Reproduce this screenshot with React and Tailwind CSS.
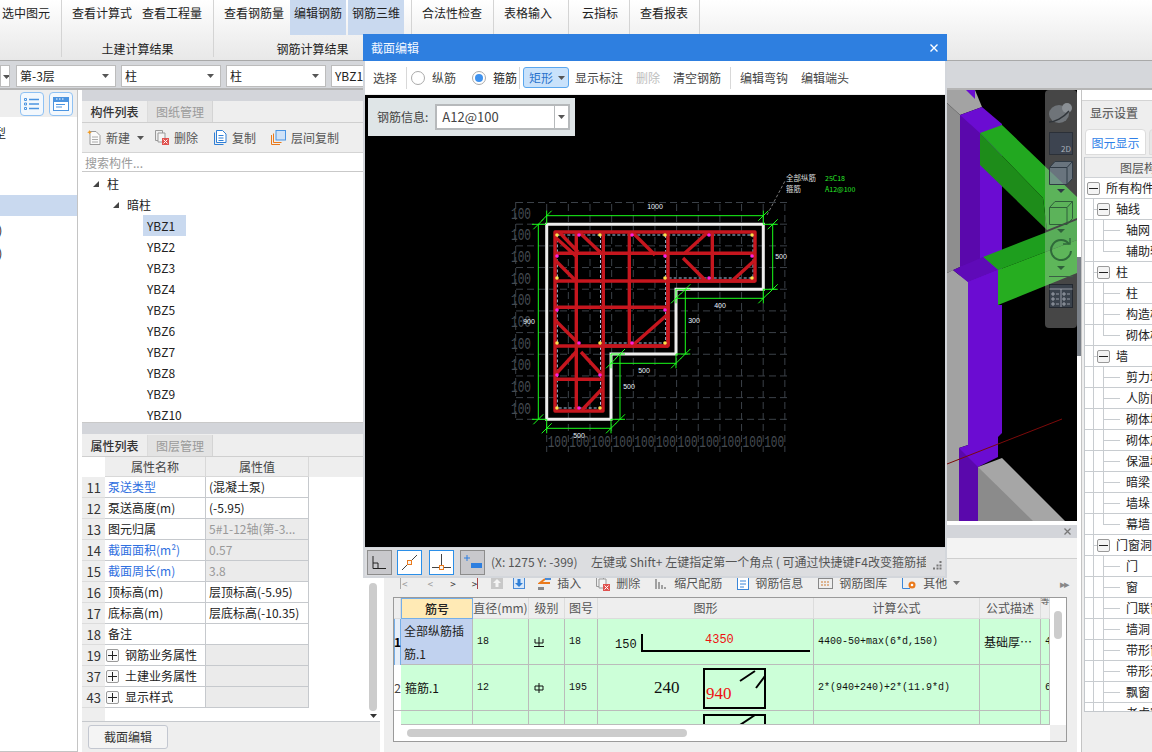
import React from "react";

const Caret = ({ c = "#555" }) => (
  <svg width="7" height="4" viewBox="0 0 7 4" className="shrink-0"><path d="M0 0h7L3.5 4z" fill={c} /></svg>
);

const Sel = ({ w, children, ml = "" }) => (
  <div className={`${w} ${ml} h-[22px] bg-white border border-[#bcbcbc] flex items-center justify-between px-[3px] text-[#222] shrink-0 overflow-hidden`}>
    <span className="whitespace-nowrap">{children}</span>
    {w !== "w-[10px]" && <span className="mr-[3px]"><Caret /></span>}
  </div>
);

const RB = ({ w = "", sel, children }) => (
  <div className={`${w} h-[35px] pt-[6px] leading-[14px] text-center whitespace-nowrap shrink-0 ${sel ? "bg-[#c9d9ef]" : ""}`}>{children}</div>
);

function Ribbon() {
  const sep = "border-r border-[#d4d4d4] h-[57px]";
  return (
    <div className="h-[60px] flex shrink-0 bg-linear-to-b from-white to-[#e8e8e8] text-[#222]">
      <div className={`w-[62px] pl-[2px] flex ${sep}`}><RB>选中图元</RB></div>
      <div className={`w-[152px] ${sep} flex flex-col`}>
        <div className="flex pl-[10px] gap-[10px] shrink-0"><RB>查看计算式</RB><RB>查看工程量</RB></div>
        <div className="h-[28px] shrink-0 flex items-center justify-center">土建计算结果</div>
      </div>
      <div className={`w-[198px] ${sep} flex flex-col`}>
        <div className="flex pl-[10px] shrink-0">
          <RB>查看钢筋量</RB>
          <div className="w-[6px]" />
          <RB w="w-[56px]" sel>编辑钢筋</RB>
          <div className="w-[2px]" />
          <RB w="w-[56px]" sel>钢筋三维</RB>
        </div>
        <div className="h-[28px] shrink-0 flex items-center justify-center">钢筋计算结果</div>
      </div>
      <div className={`w-[82px] pl-[10px] flex ${sep}`}><RB>合法性检查</RB></div>
      <div className={`w-[75px] pl-[10px] flex ${sep}`}><RB>表格输入</RB></div>
      <div className={`w-[61px] pl-[13px] flex ${sep}`}><RB>云指标</RB></div>
      <div className={`w-[70px] pl-[10px] flex ${sep}`}><RB>查看报表</RB></div>
    </div>
  );
}

function FilterBar() {
  return (
    <div className="h-[30px] shrink-0 bg-[#d5d7db] border-t border-[#a9a9a9] border-b-2 border-b-[#b5b5b5] flex items-start pt-[4px] gap-[5px]">
      <Sel w="w-[10px]"><span className="inline-block ml-[-1px] mt-[-2px] align-middle"><Caret /></span></Sel>
      <Sel w="w-[100px]" ml="ml-[1px]">第-3层</Sel>
      <Sel w="w-[100px]">柱</Sel>
      <Sel w="w-[100px]">柱</Sel>
      <Sel w="w-[100px]">YBZ1</Sel>
    </div>
  );
}

function LeftNav() {
  return (
    <div className="w-[78px] shrink-0 bg-white border-r border-[#c4c4c4] border-b flex flex-col overflow-hidden text-[#222]">
      <div className="h-[27px] shrink-0 bg-[#eeeeee] flex items-center justify-end gap-[5px] pr-[4px]">
        <div className="w-[24px] h-[24px] border border-[#8fc1f3] rounded-[4px] bg-[#f3f8fd] flex items-center justify-center">
          <svg width="16" height="14" viewBox="0 0 16 14" fill="none" stroke="#4c94e0"><path d="M.5 1.5h2v2h-2zM.5 6h2v2h-2zM.5 10.5h2v2h-2z" /><path d="M5 2.5h10M5 7h10M5 11.5h10" strokeWidth="1.4" /></svg>
        </div>
        <div className="w-[24px] h-[24px] border border-[#8fc1f3] rounded-[4px] bg-[#f3f8fd] flex items-center justify-center">
          <svg width="16" height="14" viewBox="0 0 16 14"><rect x="0" y="0" width="16" height="14" fill="#4c94e0" /><rect x="1" y="5" width="14" height="8" fill="#fff" /><path d="M3 7.5h9M3 10h6" stroke="#4c94e0" /><path d="M3 2h1.5M6 2h1.5M9 2h1.5" stroke="#fff" /></svg>
        </div>
      </div>
      <div className="h-[21px] mt-[5px] leading-[21px] ml-[-6px]">型</div>
      <div className="h-[52px] shrink-0" />
      <div className="h-[21px] bg-[#c9d9ef] shrink-0" />
      <div className="h-[22px] leading-[22px] ml-[-9px] mt-[3px]">Z)</div>
      <div className="h-[22px] leading-[22px] ml-[-9px] mt-[1px]">Z)</div>
    </div>
  );
}

const Tabs = ({ a, b }) => (
  <div className="h-[22px] shrink-0 bg-[#eeeeee] border-b border-[#cfcfcf] flex">
    <div className="w-[66px] text-center leading-[21px] font-medium text-[#333] border-r border-[#dcdcdc]">{a}</div>
    <div className="w-[65px] text-center leading-[21px] bg-[#e3e3e3] text-[#9a9a9a] border-r border-[#d4d4d4]">{b}</div>
  </div>
);

const Strip = () => <div className="h-[11px] shrink-0 bg-[#d3d5da]" />;

const IcoNew = () => (
  <svg width="14" height="15" viewBox="0 0 14 15" fill="none"><path d="M3 1.5h6l4 4v9H3z" fill="#fbfbfb" stroke="#9a9a9a" /><path d="M5 7h6M5 9.5h6M5 12h6" stroke="#aaa" /><path d="M2.5 0l.7 1.6 1.6.6-1.6.7-.7 1.6-.7-1.6L.2 2.2l1.6-.6z" fill="#f39a1e" /></svg>
);
const IcoDel = () => (
  <svg width="14" height="15" viewBox="0 0 14 15" fill="none"><path d="M.5.5h7v10h-7z" stroke="#999" /><path d="M3 3h7v9H3z" fill="#f4f4f4" stroke="#999" /><rect x="7" y="8" width="7" height="7" fill="#e0524f" /><path d="M8.500 9.500l4 4M12.500 9.500l-4 4" stroke="#fff" /></svg>
);
const IcoCopy = () => (
  <svg width="13" height="15" viewBox="0 0 13 15" fill="none"><path d="M.5 2.500v12h9" stroke="#2f7fd6" /><path d="M2.500.5h6l3.500 3.500v8.500H2.500z" fill="#fff" stroke="#2f7fd6" /><path d="M4.500 5.500h5M4.500 8h5M4.500 10.500h5" stroke="#2f7fd6" /></svg>
);
const IcoFloor = () => (
  <svg width="15" height="15" viewBox="0 0 15 15" fill="none"><path d="M.5 5v9.500H9" stroke="#ea7a1c" /><path d="M2.500 3.500v9h8" stroke="#ea7a1c" /><rect x="5" y=".5" width="9.500" height="9.500" fill="#cfe2f8" stroke="#4b95e3" /></svg>
);

const Tri = () => (
  <svg width="6" height="6" viewBox="0 0 6 6" className="shrink-0"><path d="M6 0v6H0z" fill="#444" /></svg>
);

function ComponentList() {
  const items = ["YBZ1", "YBZ2", "YBZ3", "YBZ4", "YBZ5", "YBZ6", "YBZ7", "YBZ8", "YBZ9", "YBZ10"];
  return (
    <div className="h-[333px] shrink-0 flex flex-col overflow-hidden">
      <Strip />
      <Tabs a="构件列表" b="图纸管理" />
      <div className="h-[30px] shrink-0 bg-[#eeeeee] border-b border-[#d4d4d4] flex items-center pl-[5px] text-[#555]">
        <IcoNew /><span className="ml-[5px]">新建</span><span className="ml-[7px]"><Caret /></span>
        <span className="ml-[11px]"><IcoDel /></span><span className="ml-[5px]">删除</span>
        <span className="ml-[16px]"><IcoCopy /></span><span className="ml-[5px]">复制</span>
        <span className="ml-[15px]"><IcoFloor /></span><span className="ml-[5px]">层间复制</span>
      </div>
      <div className="h-[19px] shrink-0 bg-white border-b border-[#c9c9c9] pl-[3px] leading-[19px] text-[#9a9a9a]">搜索构件...</div>
      <div className="flex-1 bg-white overflow-hidden text-[#222] pt-[1px] border-b border-[#c9c9c9]">
        <div className="h-[21px] flex items-center pl-[11px] gap-[8px]"><Tri /><span>柱</span></div>
        <div className="h-[21px] flex items-center pl-[31px] gap-[8px]"><Tri /><span>暗柱</span></div>
        {items.map((t, i) => (
          <div key={t} className="h-[21px] pl-[61px] flex">
            <div className={`h-[21px] w-[43px] pl-[4px] leading-[21px] ${i === 0 ? "bg-[#c9d9ef]" : ""}`}>{t}</div>
          </div>
        ))}
      </div>
    </div>
  );
}

const Plus = () => (
  <span className="w-[13px] h-[13px] border border-[#9a9a9a] rounded-[2px] bg-[#fafafa] flex items-center justify-center shrink-0">
    <svg width="9" height="9" viewBox="0 0 9 9"><path d="M0 4.500h9M4.500 0v9" stroke="#222" /></svg>
  </span>
);

function PropertyList() {
  const rows = [
    ["11", "泵送类型", "(混凝土泵)", "b", 0],
    ["12", "泵送高度(m)", "(-5.95)", "", 0],
    ["13", "图元归属", "5#1-12轴(第-3...", "", 1],
    ["14", "截面面积(m²)", "0.57", "b", 1],
    ["15", "截面周长(m)", "3.8", "b", 1],
    ["16", "顶标高(m)", "层顶标高(-5.95)", "", 0],
    ["17", "底标高(m)", "层底标高(-10.35)", "", 0],
    ["18", "备注", "", "", 0],
    ["19", "钢筋业务属性", "", "p", 2],
    ["37", "土建业务属性", "", "p", 2],
    ["43", "显示样式", "", "p", 2],
  ];
  return (
    <div className="flex-1 flex flex-col overflow-hidden">
      <Strip />
      <div className="h-px shrink-0 bg-[#eee]" />
      <Tabs a="属性列表" b="图层管理" />
      <div className="flex-1 bg-white flex relative">
        <div className="w-[23px] shrink-0 flex flex-col">
          <div className="h-[20px] bg-white" />
          {rows.map((r) => (
            <div key={r[0]} className="h-[21px] bg-[#eeeeee] border-b border-[#dcdcdc] text-[#333] text-right pr-[4px] leading-[21px] text-[13px]">{r[0]}</div>
          ))}
          <div className="flex-1 bg-[#eeeeee]" />
        </div>
        <div className="flex-1 flex flex-col">
          <div className="h-[20px] bg-[#eeeeee] flex">
            <div className="w-[101px] text-center leading-[19px] text-[#444] border-r border-b border-[#d8d8d8]">属性名称</div>
            <div className="w-[103px] text-center leading-[19px] text-[#444] border-r border-b border-[#d8d8d8]">属性值</div>
          </div>
          {rows.map((r) => (
            <div key={r[0]} className="h-[21px] flex">
              <div className={`w-[101px] border-r border-b border-[#c6c9cd] leading-[20px] whitespace-nowrap flex items-center ${r[3] === "b" ? "text-[#2f6fe0]" : "text-[#222]"} ${r[3] === "p" ? "pl-[1px]" : "pl-[3px]"}`}>
                {r[3] === "p" && <Plus />}
                <span className={r[3] === "p" ? "ml-[6px]" : ""}>{r[1]}</span>
              </div>
              <div className={`w-[103px] border-r border-b border-[#c6c9cd] pl-[3px] leading-[20px] whitespace-nowrap ${r[4] ? "bg-[#ebebeb] text-[#999]" : "text-[#222]"}`}>{r[2]}</div>
            </div>
          ))}
        </div>
        <div className="w-[12px] shrink-0 flex flex-col items-center justify-end pb-[3px] pr-[2px]">
          <div className="w-[8px] h-[128px] bg-[#cccccc] rounded-[4px]" />
          <div className="mt-[3px]"><Caret c="#333" /></div>
        </div>
      </div>
      <div className="h-[31px] shrink-0 bg-[#eeeeee] border-t border-[#c6c9cd] pl-[6px] pt-[3px]">
        <div className="w-[80px] h-[24px] bg-[#f4f4f4] border border-[#c3c7d0] rounded-[3px] text-center leading-[22px] text-[#333]">截面编辑</div>
      </div>
    </div>
  );
}

function Scene() {
  return (
    <svg width="130" height="431" viewBox="947 90 130 431">
      <rect x="947" y="90" width="130" height="431" fill="#000" />
      <polygon points="947,90 975,90 982,107 960,115 947,103" fill="#a3a3a3" />
      <polygon points="947,103 960,115 960,267 947,273" fill="#8e8e8e" />
      <polygon points="966,90 975,90 975,99" fill="#6a0cd0" />
      <polygon points="960,115 982,107 1002,124 1002,300 960,300" fill="#6b0cd2" />
      <polygon points="960,115 980,133 980,260 960,267" fill="#5a08ac" />
      <polygon points="980,133 1002,125 1077,197 1077,218 1047,230 1043,198" fill="#22a820" />
      <polygon points="980,133 1043,198 1047,230 980,165" fill="#1e8c1a" />
      <polygon points="983,257 1047,232 1077,220 1077,240 998,270" fill="#1e9e1e" />
      <polygon points="998,270 1077,240 1077,273 998,305" fill="#26ad20" />
      <polygon points="947,273 953,270 968,282 968,445 959,448 959,521 947,521" fill="#a2a2a2" />
      <polygon points="953,270 983,257 998,270 968,282" fill="#5f0ab8" />
      <polygon points="968,282 998,270 998,305 1002,305 1002,433 998,437 998,457 978,467 978,521 959,521 959,448 968,445" fill="#6b0cd2" />
      <polygon points="959,448 978,467 978,521 959,521" fill="#5a08ac" />
      <polygon points="978,467 1002,458 1065,521 978,521" fill="#a6a6a6" />
      <polygon points="978,467 1033,521 978,521" fill="#8b8b8b" />
      <line x1="947" y1="464" x2="1062" y2="419" stroke="#7c0a0a" />
    </svg>
  );
}

function FloatBar() {
  const s = "#2f3a44";
  return (
    <div className="absolute right-0 top-0 w-[32px] h-[238px] bg-[rgba(200,200,200,0.35)] rounded-[4px] flex flex-col items-center">
      <svg width="26" height="24" viewBox="0 0 26 24" className="mt-[11px]">
        <ellipse cx="11" cy="13" rx="10" ry="9" fill="#6f7479" />
        <circle cx="19" cy="7" r="5" fill="#8a8f94" />
        <path d="M1 21c6 0 14-4 20-11" stroke="#30353a" fill="none" strokeWidth="1.5" />
      </svg>
      <div className="w-[24px] h-[23px] mt-[7px] bg-[#3d4450] border border-[#2b3038] flex items-end justify-end pr-[1px]">
        <span className="text-[8px] leading-[11px] text-[#aab0b8]">2D</span>
      </div>
      <svg width="24" height="24" viewBox="0 0 24 24" className="mt-[6px]" fill="rgba(120,135,150,.7)" stroke={s}>
        <path d="M.5 6.500L6 .5h17.500v17L18 23.500H.5z" /><path d="M.5 6.500H18v17M18 6.500l5.500-6" fill="none" />
      </svg>
      <svg width="8" height="4" viewBox="0 0 8 4" className="mt-[4px]"><path d="M0 0h8L4 4z" fill="#2f3a44" /></svg>
      <svg width="24" height="24" viewBox="0 0 24 24" className="mt-[8px]" fill="none" stroke="#2f5f3a">
        <path d="M.5 6.500L6 .5h17.500v17L18 23.500H.5z" /><path d="M.5 6.500H18v17M18 6.500l5.500-6" />
      </svg>
      <svg width="8" height="4" viewBox="0 0 8 4" className="mt-[4px]"><path d="M0 0h8L4 4z" fill="#2f5f3a" /></svg>
      <svg width="24" height="24" viewBox="0 0 24 24" className="mt-[4px]" fill="none" stroke="#2f6a3a" strokeWidth="2">
        <path d="M20 7A10 10 0 1 0 22 14" /><path d="M14 7h7V1" strokeWidth="1.4" />
      </svg>
      <svg width="8" height="4" viewBox="0 0 8 4" className="mt-[5px]"><path d="M0 0h8L4 4z" fill="#2f5f3a" /></svg>
      <div className="w-[24px] h-px bg-[#3a5f45] mt-[6px]" />
      <svg width="24" height="24" viewBox="0 0 24 24" className="mt-[7px]" fill="#3a424c" stroke="#232830">
        <rect x=".5" y=".5" width="23" height="23" />
        <path d="M.5 5h23M12 5v18M3 9h2v2H3zM3 14h2v2H3zM3 19h2v2H3zM14 9h2v2h-2zM14 14h2v2h-2zM14 19h2v2h-2zM7 10h3M7 15h3M7 20h3M18 10h3M18 15h3M18 20h3" stroke="#aeb4bc" strokeWidth=".8" fill="none" />
      </svg>
    </div>
  );
}

const TB = ({ ml, icon, children }) => (
  <div className={`flex items-center shrink-0 ${ml}`}>
    {icon}
    {children && <span className="ml-[6px]">{children}</span>}
  </div>
);

function CellShape1() {
  return (
    <svg width="215" height="45" viewBox="0 0 215 45" className="block">
      <text x="17" y="29" fontSize="12" fill="#111" fontFamily="'Liberation Mono',monospace">150</text>
      <text x="107" y="24" fontSize="12" fill="#ee1111" fontFamily="'Liberation Mono',monospace">4350</text>
      <path d="M44 15v17h168" stroke="#000" strokeWidth="2" fill="none" />
    </svg>
  );
}
function CellShape2() {
  return (
    <svg width="215" height="45" viewBox="0 0 215 45" className="block">
      <text x="56" y="28" fontSize="17" fill="#111" fontFamily="'Liberation Serif',serif">240</text>
      <text x="108" y="34" fontSize="17" fill="#ee1111" fontFamily="'Liberation Serif',serif">940</text>
      <path d="M106 4h61v39h-61z" stroke="#000" strokeWidth="2" fill="none" />
      <path d="M142 16l15-10M158 23l9-12" stroke="#000" strokeWidth="2" fill="none" />
    </svg>
  );
}

function BottomTable() {
  const mono = "font-['Liberation_Mono','Noto_Sans_CJK_SC',monospace] text-[10px]";
  const c = "border-r border-b border-[#bbbbbb] overflow-hidden shrink-0";
  const cell = "flex items-center pl-[4px] text-[#111]";
  const h = "flex items-center justify-center border-r border-b border-[#dcdcdc] text-[#555] shrink-0 whitespace-nowrap";
  return (
    <div className="h-[145px] shrink-0 mx-[9px] mr-[10px] border border-[#9a9a9a] bg-white flex flex-col overflow-hidden">
      <div className="h-[127px] flex shrink-0 overflow-hidden">
        <div className="w-[656px] shrink-0 overflow-hidden">
          <div className="h-[21px] flex bg-[#eeeeee]">
            <div className={`${h} w-[7px]`} />
            <div className="w-[72px] h-[21px] flex items-center justify-center bg-[#ffeab5] border border-[#74aee8] text-[#222] font-medium shrink-0">筋号</div>
            <div className={`${h} w-[56px]`}>直径(mm)</div>
            <div className={`${h} w-[36px]`}>级别</div>
            <div className={`${h} w-[33px]`}>图号</div>
            <div className={`${h} w-[216px]`}>图形</div>
            <div className={`${h} w-[166px]`}>计算公式</div>
            <div className={`${h} w-[61px]`}>公式描述</div>
            <div className={`${h} w-[9px] items-start`}><span className="text-[9px] leading-[6px]">等</span></div>
          </div>
          <div className="h-[46px] flex bg-[#ccffd8]">
            <div className="w-[7px] shrink-0 bg-[#e6eef8] border-x border-[#74aee8] font-bold text-[#000] flex items-center justify-center">1</div>
            <div className={`${c} w-[72px] bg-[#c1d2ef] pl-[3px] leading-[23px] text-[#222]`}>全部纵筋插筋.1</div>
            <div className={`${c} ${cell} ${mono} w-[56px]`}>18</div>
            <div className={`${c} ${cell} w-[36px]`}>
              <svg width="10" height="10" viewBox="0 0 10 10" className="ml-[1px]" fill="none" stroke="#111"><path d="M1 2v4h8V2M5 0v10M0 9.500h10" /></svg>
            </div>
            <div className={`${c} ${cell} ${mono} w-[33px]`}>18</div>
            <div className={`${c} w-[216px]`}><CellShape1 /></div>
            <div className={`${c} ${cell} ${mono} w-[166px] pl-[3px] whitespace-nowrap`}>4400-50+max(6*d,150)</div>
            <div className={`${c} ${cell} w-[61px] pl-[3px] whitespace-nowrap`}>基础厚⋯</div>
            <div className={`${c} ${cell} ${mono} w-[9px] pl-[3px]`}>4</div>
          </div>
          <div className="h-[46px] flex bg-[#ccffd8]">
            <div className="w-[7px] shrink-0 bg-white text-[#444] border-b border-[#bbb] flex items-center justify-center">2</div>
            <div className={`${c} ${cell} w-[72px] pl-[3px]`}>箍筋.1</div>
            <div className={`${c} ${cell} ${mono} w-[56px]`}>12</div>
            <div className={`${c} ${cell} w-[36px]`}>
              <svg width="10" height="10" viewBox="0 0 10 10" className="ml-[1px]" fill="none" stroke="#111"><path d="M1 3h8v4H1zM5 0v10" /></svg>
            </div>
            <div className={`${c} ${cell} ${mono} w-[33px]`}>195</div>
            <div className={`${c} w-[216px]`}><CellShape2 /></div>
            <div className={`${c} ${cell} ${mono} w-[166px] pl-[3px] whitespace-nowrap`}>2*(940+240)+2*(11.9*d)</div>
            <div className={`${c} w-[61px]`} />
            <div className={`${c} ${cell} ${mono} w-[9px] pl-[3px]`}>6</div>
          </div>
          <div className="h-[14px] flex bg-[#ccffd8] overflow-hidden">
            <div className="w-[7px] shrink-0 bg-white" />
            <div className={`${c} w-[72px] h-[14px]`} />
            <div className={`${c} w-[56px] h-[14px]`} />
            <div className={`${c} w-[36px] h-[14px]`} />
            <div className={`${c} w-[33px] h-[14px]`} />
            <div className={`${c} w-[216px] h-[14px]`}>
              <svg width="215" height="14" viewBox="0 0 215 14" className="block"><path d="M106 14V4h61v10" stroke="#000" strokeWidth="2" fill="none" /><path d="M142 14l15-10" stroke="#000" strokeWidth="2" /></svg>
            </div>
            <div className={`${c} w-[166px] h-[14px]`} />
            <div className={`${c} w-[61px] h-[14px]`} />
            <div className={`${c} w-[9px] h-[14px]`} />
          </div>
        </div>
        <div className="flex-1 pl-[4px] pt-[13px]"><div className="w-[8px] h-[28px] bg-[#cccccc] rounded-[4px]" /></div>
      </div>
      <div className="flex-1 flex">
        <div className="w-[656px] pl-[13px] pt-[4px]"><div className="w-[280px] h-[8px] bg-[#cccccc] rounded-[4px]" /></div>
        <div className="flex-1 bg-[#eeeeee]" />
      </div>
    </div>
  );
}

function CenterCol() {
  return (
    <div className="w-[693px] shrink-0 flex flex-col bg-[#eeeeee] overflow-hidden relative">
      <div className="h-[431px] shrink-0 bg-black flex justify-end relative">
        <Scene />
        <FloatBar />
      </div>
      <div className="h-[4px] shrink-0 bg-white" />
      <div className="h-[13px] shrink-0 bg-[#d3d5da] flex items-center justify-end pr-[6px]">
        <svg width="7" height="7" viewBox="0 0 7 7"><path d="M.5.5l6 6M6.500.5l-6 6" stroke="#777" strokeWidth="1.3" /></svg>
      </div>
      <div className="h-[21px] shrink-0 bg-[#f3f3f3] border-b border-[#cfcfcf]" />
      <div className="h-[38px] shrink-0 flex items-end pb-[5px] pl-[16px] text-[#555] relative">
        <div className="h-[18px] flex items-center w-full">
          <span className="w-[1px] h-[12px] bg-[#aaa]" />
          <TB ml="ml-[1px]" icon={<span className="text-[10px] text-[#999]">&lt;</span>} />
          <TB ml="ml-[20px]" icon={<span className="text-[10px] text-[#999]">&lt;</span>} />
          <TB ml="ml-[17px]" icon={<span className="text-[10px] text-[#333]">&gt;</span>} />
          <TB ml="ml-[16px]" icon={<span className="text-[10px] text-[#333]">&gt;</span>} />
          <span className="w-[1px] h-[12px] bg-[#a44]" />
          <TB ml="ml-[13px]" icon={<svg width="12" height="12" viewBox="0 0 12 12"><rect width="12" height="12" fill="#c8c8c8" /><path d="M6 2l4 4H7.500v4h-3V6H2z" fill="#f4f4f4" /></svg>} />
          <TB ml="ml-[10px]" icon={<svg width="12" height="12" viewBox="0 0 12 12"><rect x=".5" y=".5" width="11" height="11" fill="#d8e7f8" stroke="#4b8bd6" /><path d="M6 10L2 6h2.500V2h3v4H10z" fill="#2f7fd6" /></svg>} />
          <TB ml="ml-[13px]" icon={<svg width="13" height="13" viewBox="0 0 13 13"><path d="M7 2L2 6h10" stroke="#ea7a1c" strokeWidth="2" fill="none" /><path d="M7 0h6v3H7z" fill="#4b8bd6" /><path d="M0 10h6v3H0z" fill="#888" /></svg>}>插入</TB>
          <TB ml="ml-[15px]" icon={<IcoDel />}>删除</TB>
          <TB ml="ml-[15px]" icon={<svg width="13" height="13" viewBox="0 0 13 13"><path d="M1 2v10M4 5v7M7 8v4M10 10v2" stroke="#888" strokeWidth="1.5" /></svg>}>缩尺配筋</TB>
          <TB ml="ml-[15px]" icon={<svg width="12" height="13" viewBox="0 0 12 13" fill="none"><rect x=".5" y=".5" width="11" height="12" stroke="#3a86d8" fill="#fff" /><path d="M3 4h6M3 7h6M3 10h4" stroke="#3a86d8" /></svg>}>钢筋信息</TB>
          <TB ml="ml-[15px]" icon={<svg width="15" height="13" viewBox="0 0 15 13" fill="none"><rect x=".5" y="1.500" width="14" height="10" stroke="#888" /><path d="M3 5h9M3 8h9" stroke="#cc7a33" strokeDasharray="2 1" /></svg>}>钢筋图库</TB>
          <TB ml="ml-[15px]" icon={<svg width="15" height="14" viewBox="0 0 15 14" fill="none"><path d="M.5 12.500V1h6" stroke="#3a86d8" /><path d="M.5 12.500H8" stroke="#3a86d8" /><circle cx="10" cy="9" r="3.500" fill="#ea7a1c" /><circle cx="10" cy="9" r="1.300" fill="#fff" /></svg>}>其他</TB>
          <span className="ml-[6px]"><Caret c="#777" /></span>
          <span className="ml-auto mr-[9px] text-[11px] text-[#888] tracking-[-2px]">▸▸</span>
        </div>
      </div>
      <BottomTable />
    </div>
  );
}

function RightPanel() {
  const rows = [
    [0, "所有构件"], [1, "轴线"], [2, "轴网"], [3, "辅助轴线"], [1, "柱"], [2, "柱"], [2, "构造柱"], [3, "砌体柱"],
    [1, "墙"], [2, "剪力墙"], [2, "人防门框墙"], [2, "砌体墙"], [2, "砌体加筋"], [2, "保温墙"], [2, "暗梁"], [2, "墙垛"], [3, "幕墙"],
    [1, "门窗洞"], [2, "门"], [2, "窗"], [2, "门联窗"], [2, "墙洞"], [2, "带形窗"], [2, "带形洞"], [2, "飘窗"], [2, "老虎窗"],
  ];
  const Minus = () => (
    <span className="w-[13px] h-[13px] border border-[#9a9a9a] rounded-[2px] bg-[#f4f4f4] flex items-center justify-center shrink-0">
      <svg width="9" height="1" viewBox="0 0 9 1"><path d="M0 .5h9" stroke="#222" /></svg>
    </span>
  );
  return (
    <div className="flex-1 border-l border-[#c4c4c4] bg-[#eeeeee] flex flex-col overflow-hidden text-[#222] whitespace-nowrap">
      <div className="h-[11px] shrink-0 bg-white border-b border-[#d4d4d4]" />
      <div className="h-[24px] shrink-0 pl-[8px] leading-[24px] text-[#666] font-medium">显示设置</div>
      <div className="h-[32px] shrink-0 flex items-end pl-[3px] gap-[3px] pb-[2px]">
        <div className="w-[61px] shrink-0 h-[26px] bg-white border border-[#dcdcdc] rounded-t-[4px] text-center leading-[25px] text-[#2f7fe8]">图元显示</div>
        <div className="w-[20px] shrink-0 h-[26px] bg-[#e6e6e6] border border-[#dcdcdc] rounded-t-[4px]" />
      </div>
      <div className="ml-[2px] border-l border-b border-[#c4c8cc] h-[555px] shrink-0 overflow-hidden bg-white">
        <div className="h-[21px] bg-[#eeeeee] border-t border-b border-[#cfd2d6] pl-[35px] leading-[19px] text-[#555]">图层构件</div>
        {rows.map(([lv, t], i) => (
          <div key={i} className="h-[21px] flex items-center border-b border-[#c8ccd0] overflow-hidden">
            {lv === 0 ? (
              <>
                <span className="ml-[2px]"><Minus /></span>
                <span className="ml-[6px]">{t}</span>
              </>
            ) : (
              <>
                <div className="w-[9px] self-stretch border-r border-[#c8ccd0] shrink-0" />
                {lv === 1 ? (
                  <>
                    <div className="w-[3px] h-px bg-[#c8ccd0] shrink-0" />
                    <Minus />
                    <span className="ml-[6px]">{t}</span>
                  </>
                ) : (
                  <>
                    <div className="w-[9px] shrink-0" />
                    <div className="w-[17px] self-stretch flex flex-col shrink-0">
                      <div className="h-[11px] border-l border-b border-[#c8ccd0]" />
                      <div className={`flex-1 ${lv === 2 ? "border-l border-[#c8ccd0]" : ""}`} />
                    </div>
                    <span className="ml-[6px]">{t}</span>
                  </>
                )}
              </>
            )}
          </div>
        ))}
      </div>
    </div>
  );
}

const Grid = () => {
  const xs = Array.from({ length: 12 }, (_, i) => 546.7 + i * 21.65);
  const ys = Array.from({ length: 11 }, (_, i) => 202.5 + i * 21.68);
  return (
    <g>
      <g stroke="#3b4148" strokeDasharray="7 4">
        {xs.map((x) => <line key={x} x1={x} y1="204" x2={x} y2="452" />)}
        <line x1="515.7" y1="202" x2="515.7" y2="422" />
        {ys.map((y) => <line key={y} x1="516" y1={y} x2="787" y2={y} />)}
      </g>
      <g fill="#454b52" fontSize="16" fontFamily="'Liberation Mono',monospace">
        {ys.slice(0, 10).map((y) => <text key={y} x="511" y={y + 16} textLength="20" lengthAdjust="spacingAndGlyphs">100</text>)}
        {xs.slice(0, 11).map((x) => <text key={x} x={x + 1} y="447" textLength="20" lengthAdjust="spacingAndGlyphs">100</text>)}
      </g>
    </g>
  );
};

function Rebar() {
  const diag = [
    [555, 237, 576, 256], [560, 233, 578, 252], [580, 233, 601, 253], [633, 233, 655, 255], [685, 253, 707, 233],
    [683, 258, 705, 280], [733, 280, 755, 260], [555, 260, 576, 281], [555, 320, 577, 342], [633, 345, 667, 315],
    [555, 375, 576, 352], [581, 352, 602, 375], [582, 410, 602, 389],
  ];
  const hs = [[253.3, 555, 755], [281, 555, 755], [307.3, 555, 668], [346, 555, 668], [379.3, 555, 602.7]];
  const vs = [[576.3, 232, 411], [603.3, 232, 346], [629.3, 232, 346], [668, 232, 346], [712.3, 232, 281]];
  const yellow = [[557, 235], [600, 235], [665, 235], [752, 235], [557, 278], [665, 278], [752, 278], [557, 343], [600, 343], [665, 343], [557, 408], [600, 408]];
  const mag = [[579, 235], [632, 235], [709, 235], [557, 256], [665, 256], [752, 256], [709, 278], [557, 310], [665, 310], [579, 343], [632, 343], [557, 375], [600, 375], [579, 408]];
  return (
    <g>
      <path d="M557.3 235H753V278H665.7V343H600.5V408H557.3Z M600.5 235V343 M665.7 235V278" fill="none" stroke="#a9c6e6" strokeDasharray="3 2" />
      <g stroke="#c6161e" strokeWidth="3.4" fill="none" strokeLinejoin="round">
        <path d="M555 232H755V281H668V346H603V411H555Z" />
        {hs.map(([y, a, b]) => <line key={y} x1={a} y1={y} x2={b} y2={y} />)}
        {vs.map(([x, a, b]) => <line key={x} x1={x} y1={a} x2={x} y2={b} />)}
        {diag.map((d, i) => <line key={i} x1={d[0]} y1={d[1]} x2={d[2]} y2={d[3]} />)}
      </g>
      {yellow.map(([x, y], i) => <circle key={i} cx={x} cy={y} r="1.8" fill="#ffe14d" />)}
      {mag.map(([x, y], i) => <circle key={i} cx={x} cy={y} r="1.8" fill="#ff20e0" />)}
    </g>
  );
}

function Dims() {
  const t = (x, y) => `M${x - 5} ${y + 5}L${x + 5} ${y - 5}`;
  const hd = (y, a, b, e) => `M${a} ${y}H${b}M${a} ${e}V${y + (y > e ? 5 : -5)}M${b} ${e}V${y + (y > e ? 5 : -5)}${t(a, y)}${t(b, y)}`;
  const vd = (x, a, b, e) => `M${x} ${a}V${b}M${e} ${a}H${x + 5}M${e} ${b}H${x + 5}${t(x, a)}${t(x, b)}`;
  const lbl = [["1000", 655, 209], ["900", 529, 324], ["500", 781, 259], ["400", 720, 308], ["300", 694, 323], ["500", 644, 373], ["500", 629, 389], ["500", 579, 438]];
  return (
    <g>
      <path
        d={[
          hd(215.7, 546.7, 763.3, 224),
          vd(772.7, 224.3, 289.3, 763),
          hd(298.3, 676, 763.3, 289),
          vd(685.3, 289.3, 354, 676),
          hd(363.3, 611, 676, 354),
          vd(620, 354, 419.3, 611),
          hd(428.3, 546.7, 611, 419),
          `M538.3 224.3V419.3M532 224.3H546M532 419.3H546${t(538.3, 224.3)}${t(538.3, 419.3)}`,
        ].join("")}
        stroke="#19ff19"
        fill="none"
      />
      <path d="M767 215L785 181" stroke="#777" strokeDasharray="3 2" fill="none" />
      {lbl.map(([s, x, y], i) => (
        <text key={i} x={x} y={y} textAnchor="middle" fontSize="7" fill="#e8f2ff" fontFamily="'Liberation Sans',sans-serif">{s}</text>
      ))}
      <g fontSize="7.5" fontFamily="'Noto Sans CJK SC',sans-serif">
        <text x="786" y="181" fill="#ddd">全部纵筋</text>
        <text x="825" y="181" fill="#29e829" fontSize="7">25C18</text>
        <text x="786" y="192" fill="#ddd">箍筋</text>
        <text x="825" y="192" fill="#29e829" fontSize="7">A12@100</text>
      </g>
    </g>
  );
}

function Modal() {
  const sep = "w-px h-[22px] bg-[#d8d8d8] shrink-0";
  const radio = "w-[14px] h-[14px] rounded-full border border-[#aaaaaa] bg-white flex items-center justify-center shrink-0";
  const btn = "w-[25px] h-[25px] flex items-center justify-center shrink-0";
  return (
    <div className="absolute left-[363px] top-[34px] w-[584px] h-[544px] bg-[#d3d6db] flex flex-col z-10">
      <div className="h-[27px] shrink-0 bg-[#2e7fe0] text-[#f4f8ff] flex items-center justify-between pl-[8px] pr-[9px]">
        <span>截面编辑</span>
        <svg width="8" height="8" viewBox="0 0 8 8"><path d="M.5.5l7 7M7.500.5l-7 7" stroke="#fff" strokeWidth="1.4" /></svg>
      </div>
      <div className="flex-1 mx-[2px] flex flex-col bg-white min-h-0">
        <div className="h-[33px] shrink-0 flex items-center text-[#444] whitespace-nowrap">
          <span className="ml-[8px]">选择</span>
          <span className={`${sep} ml-[9px]`} />
          <span className={`${radio} ml-[4px]`} />
          <span className="ml-[7px]">纵筋</span>
          <span className={`${radio} ml-[16px]`}><span className="w-[8px] h-[8px] rounded-full bg-[#3f92ee]" /></span>
          <span className="ml-[7px] text-[#222]">箍筋</span>
          <span className={`${sep} ml-[2px]`} />
          <span className="ml-[3px] w-[46px] h-[21px] bg-[#c9e2fb] border border-[#5ba7ee] rounded-[3px] flex items-center pl-[5px] gap-[5px] text-[#2a72cc]">矩形<Caret /></span>
          <span className="ml-[6px]">显示标注</span>
          <span className="ml-[13px] text-[#bdbdbd]">删除</span>
          <span className="ml-[13px]">清空钢筋</span>
          <span className={`${sep} ml-[9px]`} />
          <span className="ml-[9px]">编辑弯钩</span>
          <span className="ml-[13px]">编辑端头</span>
        </div>
        <div className="h-px shrink-0 bg-[#eee]" />
        <div className="h-[452px] shrink-0 bg-black relative overflow-hidden">
          <svg width="580" height="452" viewBox="365 95 580 452" className="absolute inset-0">
            <Grid />
            <path d="M546.7 224.3H763.3V289.3H676V354H611V419.3H546.7Z" fill="none" stroke="#eeeeee" strokeWidth="3" />
            <Rebar />
            <Dims />
          </svg>
          <div className="absolute left-[3px] top-[3px] w-[207px] h-[38px] bg-[#dfe5e7] flex items-center pl-[9px] text-[#444] whitespace-nowrap">
            <span>钢筋信息:</span>
            <div className="ml-[7px] w-[135px] h-[26px] bg-white border-2 border-[#b6b9bb] flex items-center">
              <span className="flex-1 pl-[5px] text-[13px] text-[#444]">A12@100</span>
              <span className="w-[14px] self-stretch border-l border-[#b6b9bb] flex items-center justify-center"><Caret /></span>
            </div>
          </div>
        </div>
        <div className="h-px shrink-0 bg-[#d3d6db]" />
        <div className="h-[28px] flex-1 bg-[#dcdde0] flex items-center pl-[2px] overflow-hidden whitespace-nowrap text-[#555] relative">
          <div className={`${btn} bg-[#c8c8cc] border border-[#8c8c8c]`}>
            <svg width="15" height="15" viewBox="0 0 15 15" fill="none" stroke="#222"><path d="M1 1v12.500h13M1 8h5v5.500" /></svg>
          </div>
          <div className={`${btn} ml-[5px] bg-white border border-[#2b8fe8]`}>
            <svg width="17" height="17" viewBox="0 0 17 17"><path d="M1 16L16 1" stroke="#444" /><rect x="6.500" y="6.500" width="4" height="4" fill="#f5f5f5" stroke="#ea7a1c" /></svg>
          </div>
          <div className={`${btn} ml-[7px] bg-white border border-[#2b8fe8]`}>
            <svg width="19" height="17" viewBox="0 0 19 17"><path d="M0 13.500h19M9.500 0v14" stroke="#444" /><rect x="7.500" y="11.500" width="4" height="4" fill="#f5f5f5" stroke="#ea7a1c" /></svg>
          </div>
          <div className={`${btn} ml-[6px] bg-[#c8c8cc] border border-[#8c8c8c]`}>
            <svg width="18" height="16" viewBox="0 0 18 16"><path d="M3 1v6M0 4h6" stroke="#2e7fe0" /><rect x="7" y="9" width="11" height="5" fill="#2e7fe0" /></svg>
          </div>
          <span className="ml-[6px] w-[435px] overflow-hidden shrink-0">(X: 1275 Y: -399)&nbsp;&nbsp;&nbsp;&nbsp;&nbsp;左键或 Shift+ 左键指定第一个角点 ( 可通过快捷键F4改变箍筋插入方式)</span>
          <svg width="9" height="9" viewBox="0 0 9 9" className="ml-[7px] mt-[7px] shrink-0"><path d="M6.500 0h2v2h-2zM3.500 3.500h2v2h-2zM6.500 3.500h2v2h-2zM0 6.500h2v2H0zM3.500 6.500h2v2h-2zM6.500 6.500h2v2h-2z" fill="#777" /></svg>
        </div>
      </div>
      <div className="h-[2px] shrink-0" />
    </div>
  );
}

export default function App() {
  return (
    <div className="w-[1152px] h-[752px] relative overflow-hidden bg-white flex flex-col text-[12px] font-['Noto_Sans_CJK_SC','Liberation_Sans',sans-serif]">
      <Ribbon />
      <FilterBar />
      <div className="flex-1 flex min-h-0 bg-white">
        <LeftNav />
        <div className="w-[4px] shrink-0" />
        <div className="w-[298px] shrink-0 flex flex-col">
          <ComponentList />
          <PropertyList />
        </div>
        <div className="w-[4px] shrink-0" />
        <CenterCol />
        <div className="w-[4px] shrink-0 bg-white flex flex-col">
          <div className="h-[167px]" />
          <div className="h-[99px] bg-[#7a8088]" />
        </div>
        <RightPanel />
      </div>
      <Modal />
    </div>
  );
}
